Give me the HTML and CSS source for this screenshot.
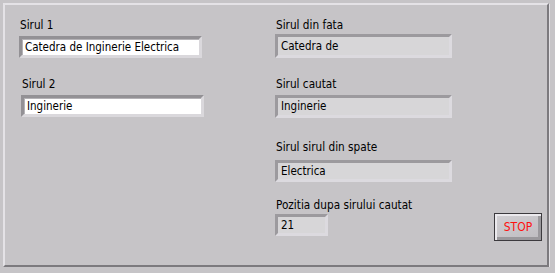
FILE: index.html
```html
<!DOCTYPE html>
<html lang="ro">
<head>
    <meta charset="UTF-8">
    <title>Siruri</title>
    <link rel="stylesheet" href="styles.css">
</head>
<body>
    <div class="panel">
        <div class="col col-left">
            <div class="control">
                <div class="label">Sirul 1</div>
                <div class="field input">Catedra de Inginerie Electrica</div>
            </div>
            <div class="control control-2">
                <div class="label">Sirul 2</div>
                <div class="field input">Inginerie</div>
            </div>
        </div>

        <div class="col col-right">
            <div class="control out-1">
                <div class="label">Sirul din fata</div>
                <div class="field output">Catedra de</div>
            </div>
            <div class="control out-2">
                <div class="label">Sirul cautat</div>
                <div class="field output">Inginerie</div>
            </div>
            <div class="control out-3">
                <div class="label">Sirul sirul din spate</div>
                <div class="field output">Electrica</div>
            </div>
            <div class="control out-4">
                <div class="label">Pozitia dupa sirului cautat</div>
                <div class="field output number">21</div>
            </div>
        </div>

        <div class="side">
            <button class="stop-btn">STOP</button>
        </div>
    </div>
</body>
</html>
```

FILE: styles.css
```css
* {
    box-sizing: border-box;
}
body {
    margin: 0;
    padding: 3px 0 0 3px;
    background-color: #c6c4c7;
    font-family: 'DejaVu Sans Condensed', 'DejaVu Sans', sans-serif;
    font-size: 11.7px;
    color: #000;
}
.panel {
    display: flex;
    width: 546px;
    height: 264px;
    padding: 13px 0 0 14px;
    border: 2px solid;
    border-color: #e4e2e6 #7c7a7e #7c7a7e #e4e2e6;
    box-shadow: 1px 1px 0 #e2e0e4;
}
.col {
    display: flex;
    flex-direction: column;
}
.col-left {
    width: 185px;
}
.col-right {
    width: 177px;
    margin-left: 71px;
}
.label {
    height: 14px;
    line-height: 14px;
    padding-left: 1px;
    white-space: nowrap;
}
.field {
    border: 3px solid;
    font-size: 11.5px;
    padding-left: 3px;
    white-space: nowrap;
    overflow: hidden;
}
.input {
    width: 183px;
    height: 22px;
    line-height: 16px;
    margin-top: 4px;
    background: #fff;
    border-color: #939195 #dad8dc #dad8dc #939195;
    box-shadow: inset 1px 1px 0 #b4b2b6;
}
.control-2 {
    margin-top: 19px;
    margin-left: 2px;
}
.output {
    width: 177px;
    height: 23px;
    line-height: 17px;
    background: #d7d6d8;
    border-color: #9c9a9e #dcdadf #dcdadf #9c9a9e;
}
.out-1 .field {
    height: 24px;
    margin-top: 2px;
    line-height: 18px;
}
.out-2 {
    margin-top: 19px;
}
.out-2 .field {
    margin-top: 4px;
}
.out-3 {
    margin-top: 22px;
}
.out-3 .field {
    height: 22px;
    line-height: 16px;
    margin-top: 6px;
}
.out-4 {
    margin-top: 16px;
}
.out-4 .field {
    height: 22px;
    line-height: 16px;
    margin-top: 2px;
}
.number {
    width: 53px;
}
.side {
    display: flex;
    align-items: flex-end;
    padding-left: 42px;
}
.stop-btn {
    width: 48px;
    height: 28px;
    margin-bottom: 24px;
    padding: 0;
    border: 1px solid #3c3a3e;
    background: linear-gradient(160deg, #d2d0d4, #bdbbbf);
    box-shadow: inset 2px 2px 0 #ebe9ed, inset -3px -3px 0 #9a989c;
    color: #ff1010;
    font-family: 'DejaVu Sans Condensed', 'DejaVu Sans', sans-serif;
    font-size: 12px;
    line-height: 26px;
}
```
